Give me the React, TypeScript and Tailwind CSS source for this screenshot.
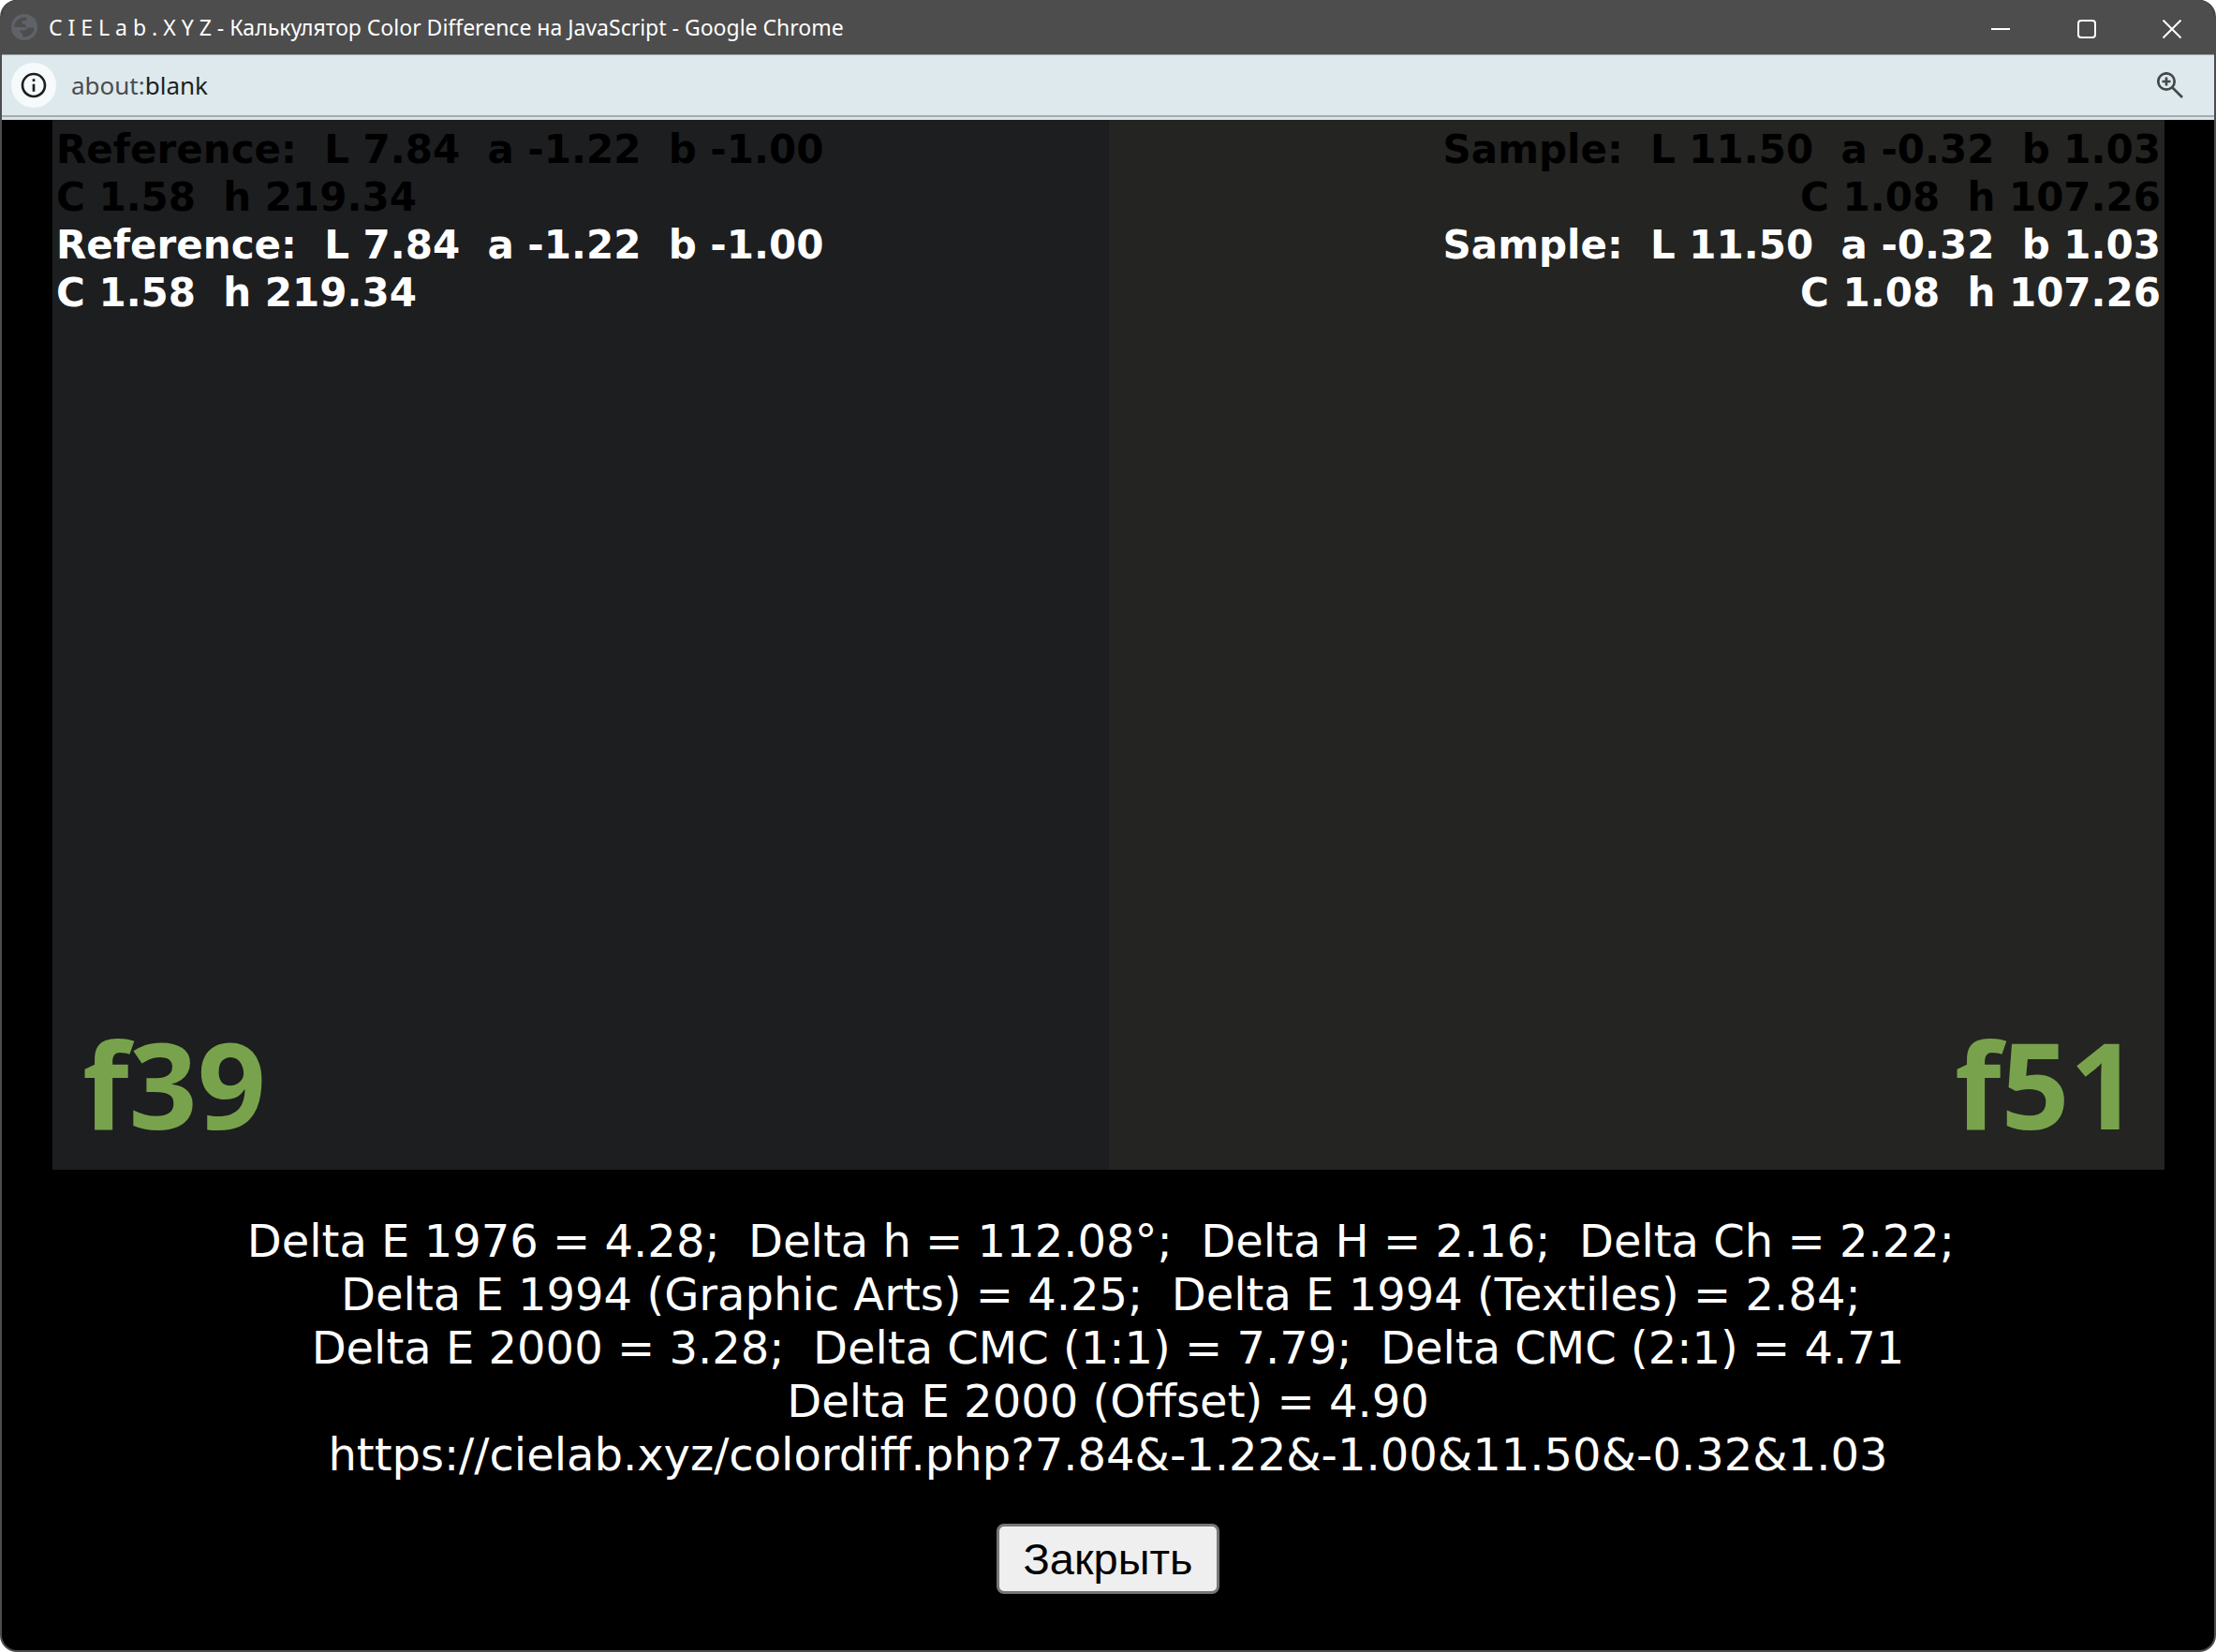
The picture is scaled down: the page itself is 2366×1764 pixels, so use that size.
import { MdInfoOutline } from "react-icons/md";

type Swatch = {
	name: string;
	lab: string;
	lch: string;
	label: string;
};

const reference: Swatch = {
	name: "Reference",
	lab: "L 7.84  a -1.22  b -1.00",
	lch: "C 1.58  h 219.34",
	label: "f39",
};

const sample: Swatch = {
	name: "Sample",
	lab: "L 11.50  a -0.32  b 1.03",
	lch: "C 1.08  h 107.26",
	label: "f51",
};

const results = [
	"Delta E 1976 = 4.28;  Delta h = 112.08°;  Delta H = 2.16;  Delta Ch = 2.22; ",
	"Delta E 1994 (Graphic Arts) = 4.25;  Delta E 1994 (Textiles) = 2.84; ",
	"Delta E 2000 = 3.28;  Delta CMC (1:1) = 7.79;  Delta CMC (2:1) = 4.71",
	"Delta E 2000 (Offset) = 4.90",
	"https://cielab.xyz/colordiff.php?7.84&-1.22&-1.00&11.50&-0.32&1.03",
];

function TitleBar() {
	return (
		<header className="flex h-[58px] items-center justify-between bg-[#4d4d4d] pl-2.5 font-['Noto_Sans',sans-serif] text-white">
			<div className="flex items-center gap-3">
				<svg viewBox="0 0 28 28" className="size-7" aria-hidden="true">
					<circle cx="14" cy="14" r="14" fill="#5f6368" />
					<path
						d="M3.500 14C3.500 8 8 3.500 14 3.500c1 0 2 .1 3 .4-.3 2.100-1.500 3.100-3.500 3.100-1.500 0-2 .8-2 2.300 0 1.200 1 1.500 2.200 1.500 1.800 0 2 1.200 2 2.700 0 .8-.5 1.200-1.300 1-1.200-.3-2-.5-3.400-.5z"
						fill="#4d4d4d"
					/>
					<path
						d="M9.500 17.500h4c1.500 0 2-.5 2.500-1.500.6-1.200 1.300-1.500 2.500-1.500h6C24.300 20 20 24.500 14 24.500c-.5 0-1.200 0-2-.2v-2.300c0-.8-.3-1.200-1-1.500-1-.5-1.500-1.500-1.500-3z"
						fill="#4d4d4d"
					/>
				</svg>
				<h1 className="text-[23px] whitespace-pre">
					C I E L a b . X Y Z - Калькулятор Color Difference на JavaScript -
					Google Chrome
				</h1>
			</div>
			<div className="flex h-full">
				<button aria-label="Свернуть" className="grid w-[92px] place-items-center pt-1">
					<svg viewBox="0 0 20 20" className="size-5" stroke="white" strokeWidth="2">
						<path d="M0 10H20" />
					</svg>
				</button>
				<button aria-label="Развернуть" className="grid w-[92px] place-items-center pt-1">
					<svg viewBox="0 0 20 20" className="size-5" fill="none" stroke="white" strokeWidth="2">
						<rect x="1" y="1" width="18" height="18" rx="3" />
					</svg>
				</button>
				<button aria-label="Закрыть окно" className="grid w-[90px] place-items-center pt-1">
					<svg viewBox="0 0 20 20" className="size-5" stroke="white" strokeWidth="2">
						<path d="M.5.5l19 19M19.500.5l-19 19" />
					</svg>
				</button>
			</div>
		</header>
	);
}

function AddressBar() {
	return (
		<div className="border-y border-t-[#a4a9ab] border-b-[#d9e3e8] bg-[#dee9ee]">
			<div className="flex h-[66px] items-center justify-between border-b-2 border-[#a6abad] pr-[33px] pl-2.5">
				<div className="flex items-center gap-4">
					<button
						aria-label="Сведения о сайте"
						className="grid size-12 place-items-center rounded-full bg-[#f6fafb] text-[#1c1f20]"
					>
						<MdInfoOutline className="size-8" />
					</button>
					<span className="font-['Noto_Sans',sans-serif] text-[26px] text-[#4a4d4e]">
						about:<span className="text-[#1c1f20]">blank</span>
					</span>
				</div>
				<button aria-label="Масштаб" className="text-[#43484a]">
					<svg
						viewBox="0 0 28 28"
						className="size-7"
						fill="none"
						stroke="currentColor"
						strokeWidth="2.700"
					>
						<circle cx="10" cy="10" r="8.700" />
						<path d="M10 5.500v9M5.500 10h9M16.200 16.200L27 27" />
					</svg>
				</button>
			</div>
			<div className="h-0.5 bg-[#d9e3e8]" />
		</div>
	);
}

function SwatchText({ swatch }: { swatch: Swatch }) {
	return (
		<>
			<p>
				{swatch.name}:{"  "}
				{swatch.lab}
			</p>
			<p>{swatch.lch}</p>
		</>
	);
}

// The values are printed twice so they stay readable on any colour.
function SwatchPanel({ swatch, className }: { swatch: Swatch; className: string }) {
	return (
		<section
			className={`flex flex-1 flex-col justify-between px-1 pt-1.5 pb-5 text-[42px] leading-[51px] font-bold whitespace-pre font-['DejaVu_Sans',sans-serif] ${className}`}
		>
			<div>
				<div className="text-black">
					<SwatchText swatch={swatch} />
				</div>
				<div className="text-white">
					<SwatchText swatch={swatch} />
				</div>
			</div>
			<h2 className="pr-6 pl-7 font-['Noto_Sans',sans-serif] text-[128px] leading-[144px] text-[#78a34c]">
				{swatch.label}
			</h2>
		</section>
	);
}

function App() {
	return (
		<div className="flex min-h-screen flex-col overflow-hidden rounded-[18px] border-x-2 border-b-2 border-[#4d4d4d] bg-black">
			<TitleBar />
			<AddressBar />
			<main className="flex flex-1 flex-col items-center pb-[60px]">
				<div className="flex w-full flex-1 pr-[53px] pl-[54px]">
					<SwatchPanel swatch={reference} className="bg-[#1d1e20]" />
					<SwatchPanel swatch={sample} className="bg-[#242422] text-right" />
				</div>
				<div className="mt-12 text-center font-['DejaVu_Sans',sans-serif] text-[48px] leading-[57px] whitespace-pre text-white">
					{results.map((line) => (
						<p key={line}>{line}</p>
					))}
				</div>
				<button className="mt-[45px] h-[75px] rounded-lg border-3 border-[#767676] bg-[#efefef] px-[25px] font-['Liberation_Sans',sans-serif] text-[47px] leading-[54px] text-black">
					Закрыть
				</button>
			</main>
		</div>
	);
}

export default App;
